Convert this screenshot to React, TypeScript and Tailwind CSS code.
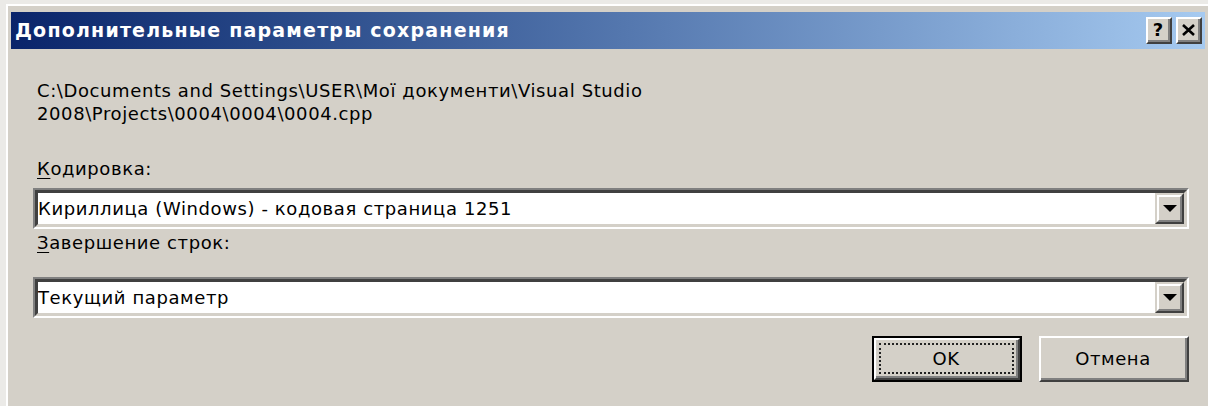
import React from "react";

const font = { fontFamily: '"DejaVu Sans", "Noto Sans", sans-serif' };

function Combo({ value }: { value: string }) {
  return (
    <div className="h-[41px] border-t-2 border-l-2 border-t-[#808080] border-l-[#808080] border-b-2 border-r-2 border-b-white border-r-white">
      <div className="h-full flex border-t-[3px] border-l-[3px] border-t-[#404040] border-l-[#404040] border-b-[3px] border-r-[3px] border-b-[#d4d0c8] border-r-[#d4d0c8] bg-white">
        <div className="flex-1 flex items-center text-[18px] tracking-[0.6px] text-black leading-none">
          {value}
        </div>
        <div className="w-[29px] h-full bg-[#d4d0c8] border-t-2 border-l-2 border-t-[#d4d0c8] border-l-[#d4d0c8] border-b-2 border-r-2 border-b-[#404040] border-r-[#404040]">
          <div className="h-full flex items-center justify-center border-t-2 border-l-2 border-t-white border-l-white border-b-2 border-r-2 border-b-[#808080] border-r-[#808080]">
            <svg width="14" height="8" viewBox="0 0 14 8">
              <polygon points="0,0 14,0 7,7" fill="#000" />
            </svg>
          </div>
        </div>
      </div>
    </div>
  );
}

function Button({ label, isDefault }: { label: string; isDefault?: boolean }) {
  const face = (
    <div className="h-full border-t-2 border-l-2 border-t-white border-l-white border-b-2 border-r-2 border-b-[#404040] border-r-[#404040]">
      <div className="h-full border-b-2 border-r-2 border-b-[#808080] border-r-[#808080] bg-[#d4d0c8] flex items-center justify-center">
        {isDefault ? (
          <div className="w-[135px] h-[31px] border-2 border-dotted border-[#222] flex items-center justify-center text-[18px] tracking-[0.6px] text-black">
            {label}
          </div>
        ) : (
          <span className="text-[18px] tracking-[0.6px] text-black">{label}</span>
        )}
      </div>
    </div>
  );
  return (
    <div className={isDefault ? "w-[150px] h-[46px] border-2 border-black" : "w-[150px] h-[46px]"}>{face}</div>
  );
}

function TitleButton({ children }: { children: React.ReactNode }) {
  return (
    <div className="w-[26px] h-[27px] border-t-2 border-l-2 border-t-white border-l-white border-b-2 border-r-2 border-b-[#404040] border-r-[#404040]">
      <div className="h-full bg-[#d4d0c8] border-b-2 border-r-2 border-b-[#808080] border-r-[#808080] flex items-center justify-center">
        {children}
      </div>
    </div>
  );
}

export default function App() {
  return (
    <div className="w-[1208px] h-[406px] overflow-hidden bg-[#ebeae7] pt-[4px] pl-[6px]" style={font}>
      <div className="h-full border-t-2 border-l-2 border-t-white border-l-white bg-[#d4d0c8] pt-[6px] pl-[3px] pr-[3px]">
        {/* caption */}
        <div className="h-[37px] flex items-center justify-between bg-gradient-to-r from-[#0a246a] to-[#a6caf0] pl-[4px] pr-[3px]">
          <span className="text-white font-bold text-[19px] tracking-[1.2px] leading-none">
            Дополнительные параметры сохранения
          </span>
          <div className="flex gap-[4px]">
            <TitleButton>
              <span className="text-[18px] font-bold text-black leading-none">?</span>
            </TitleButton>
            <TitleButton>
              <svg width="13" height="12" viewBox="0 0 13 12">
                <path d="M1 1 L12 11 M12 1 L1 11" stroke="#000" strokeWidth="2.6" />
              </svg>
            </TitleButton>
          </div>
        </div>

        {/* body */}
        <div className="pl-[22px] pr-[16px] text-black text-[18px] tracking-[0.6px]">
          <div className="pl-[4px] pt-[30px] leading-[23px]">
            <div>C:\Documents and Settings\USER\Мої документи\Visual Studio</div>
            <div>2008\Projects\0004\0004\0004.cpp</div>
          </div>
          <div className="pl-[4px] mt-[32px] leading-[23px]">
            <span className="underline underline-offset-[3px]">К</span>одировка:
          </div>
          <div className="mt-[8px]">
            <Combo value="Кириллица (Windows) - кодовая страница 1251" />
          </div>
          <div className="pl-[4px] mt-[2px] leading-[23px]">
            <span className="underline underline-offset-[3px]">З</span>авершение строк:
          </div>
          <div className="mt-[23px]">
            <Combo value="Текущий параметр" />
          </div>
          <div className="flex justify-end gap-[17px] mt-[18px]">
            <Button label="OK" isDefault />
            <Button label="Отмена" />
          </div>
        </div>
      </div>
    </div>
  );
}
